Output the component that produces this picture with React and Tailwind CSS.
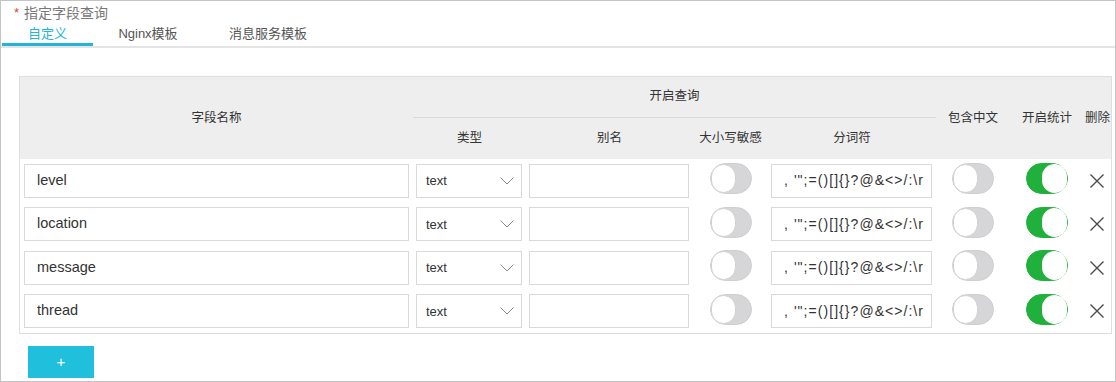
import React from "react";

const cjk = { fontFamily: '"Liberation Sans", "Noto Sans CJK SC", sans-serif' };

function Toggle({ on }) {
  if (on) {
    return (
      <div className="relative h-[31px] w-[42px] rounded-full border border-[#22b03c] bg-[#1fb13b]">
        <div className="absolute right-0 top-0 h-[29px] w-[25px] rounded-full bg-white" />
      </div>
    );
  }
  return (
    <div className="relative h-[31px] w-[42px] rounded-full border border-[#cfcfcf] bg-[#d6d6d8]">
      <div className="absolute left-0 top-0 h-[29px] w-[25px] rounded-full border border-[#d0d0d0] bg-white" />
    </div>
  );
}

function XIcon() {
  return (
    <svg width="16" height="16" viewBox="0 0 16 16" fill="none" stroke="#4a4a4a" strokeWidth="1.4">
      <path d="M1.5 1.5 L14.5 14.5 M14.5 1.5 L1.5 14.5" />
    </svg>
  );
}

function Chevron() {
  return (
    <svg width="14" height="8" viewBox="0 0 14 8" fill="none" stroke="#8a8a8a" strokeWidth="1">
      <path d="M0.5 0.5 L7 7 L13.5 0.5" />
    </svg>
  );
}

const rows = ["level", "location", "message", "thread"];
const delim = ", '\";=()[]{}?@&<>/:\\r";

export default function App() {
  return (
    <div
      className="relative h-[382px] w-[1116px] border border-[#c4c4c4] bg-white text-[#333]"
      style={cjk}
    >
      {/* title */}
      <div className="flex h-[22px] items-center pl-[13px] pt-[2px] text-[14px] text-[#777]">
        <span className="mr-[5px] text-[13px] text-[#e0452f]">*</span>
        <span>指定字段查询</span>
      </div>

      {/* tabs */}
      <div className="flex h-[25px] items-end border-b-2 border-[#e4e4e4] text-[13px]">
        <div className="flex h-[25px] w-[91px] ml-[1px] items-start justify-center border-b-[3px] border-[#21b5d7] pt-[3px] text-[#21b5d7]">
          自定义
        </div>
        <div className="flex h-[25px] w-[110px] items-start justify-center pt-[3px] text-[#555]">
          Nginx模板
        </div>
        <div className="flex h-[25px] w-[130px] items-start justify-center pt-[3px] text-[#555]">
          消息服务模板
        </div>
      </div>

      {/* table */}
      <div className="ml-[18px] mt-[28px] w-[1093px] border border-[#dedede]">
        {/* header */}
        <div className="grid grid-cols-[393px_113px_167px_75px_168px_74px_74px_27px] grid-rows-[41px_41px] bg-[#eeeeee] text-[12.5px] text-[#333]">
          <div className="row-span-2 flex items-center justify-center">字段名称</div>
          <div className="col-span-4 flex items-center justify-center border-b border-[#d8d8d8] pb-[1px]">
            开启查询
          </div>
          <div className="row-span-2 col-start-6 row-start-1 flex items-center justify-center">包含中文</div>
          <div className="row-span-2 col-start-7 row-start-1 flex items-center justify-center">开启统计</div>
          <div className="row-span-2 col-start-8 row-start-1 flex items-center justify-center">删除</div>
          <div className="col-start-2 row-start-2 flex items-center justify-center">类型</div>
          <div className="col-start-3 row-start-2 flex items-center justify-center">别名</div>
          <div className="col-start-4 row-start-2 flex items-center justify-center whitespace-nowrap">大小写敏感</div>
          <div className="col-start-5 row-start-2 flex items-center justify-center">分词符</div>
        </div>

        {/* rows */}
        {rows.map((name) => (
          <div
            key={name}
            className="grid h-[43.5px] grid-cols-[393px_113px_167px_75px_168px_74px_74px_27px] items-center"
          >
            <div className="px-[4px]">
              <div className="flex h-[34px] items-center border border-[#d9d9d9] pl-[12px] text-[14.5px] text-[#333]">
                {name}
              </div>
            </div>
            <div className="pl-[3px] pr-[4px]">
              <div className="flex h-[34px] items-center justify-between border border-[#d9d9d9] pl-[9px] pr-[7px] text-[13px] text-[#333]">
                <span>text</span>
                <Chevron />
              </div>
            </div>
            <div className="pl-[3px] pr-[4px]">
              <div className="h-[34px] border border-[#d9d9d9]" />
            </div>
            <div className="flex justify-center pb-[4px]">
              <Toggle on={false} />
            </div>
            <div className="pl-[3px] pr-[4px]">
              <div className="flex h-[34px] items-center overflow-hidden whitespace-nowrap border border-[#d9d9d9] pl-[12px] text-[14px] tracking-[1.05px] text-[#333]">
                {delim}
              </div>
            </div>
            <div className="flex justify-center pb-[4px]">
              <Toggle on={false} />
            </div>
            <div className="flex justify-center pb-[4px]">
              <Toggle on={true} />
            </div>
            <div className="flex justify-center pr-[1px]">
              <XIcon />
            </div>
          </div>
        ))}
      </div>

      {/* add button */}
      <div className="ml-[27px] mt-[12px] flex h-[32px] w-[66px] items-center justify-center bg-[#20c0dd] text-[15px] text-white">
        +
      </div>
    </div>
  );
}
